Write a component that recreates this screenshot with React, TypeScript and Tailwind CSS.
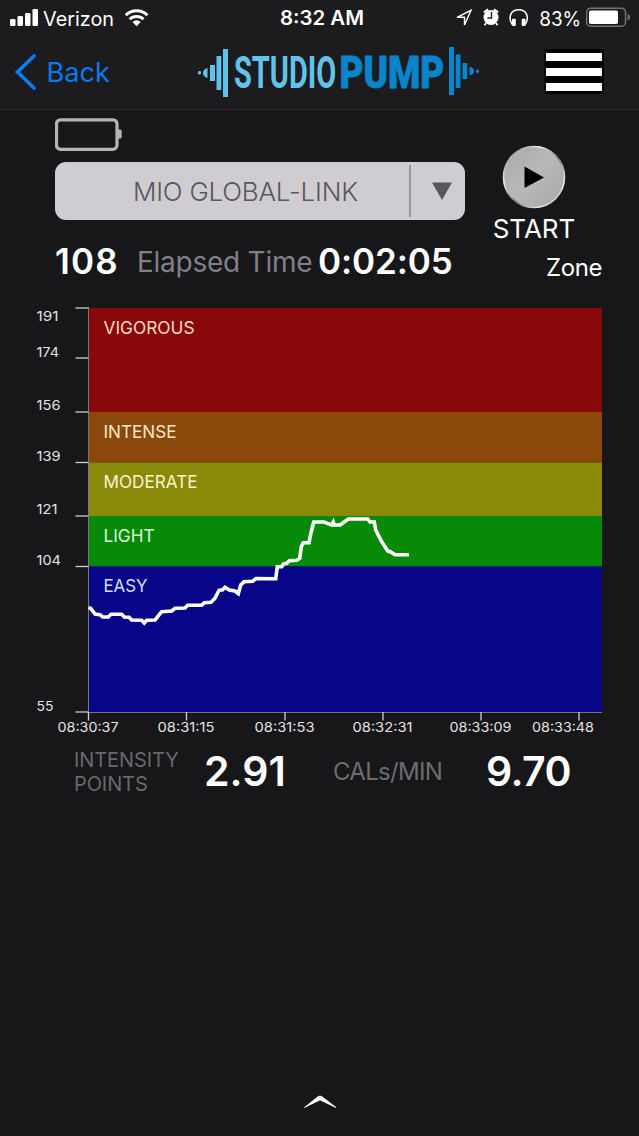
import React from 'react';

const zones = [
  { name: 'VIGOROUS', top: 308, bottom: 412, color: '#890809', text: '#f6dcc4', width: 91 },
  { name: 'INTENSE', top: 412, bottom: 462.5, color: '#8a480a', text: '#fbe8c8', width: 73 },
  { name: 'MODERATE', top: 462.5, bottom: 516, color: '#8a890a', text: '#fbf6cc', width: 94 },
  { name: 'LIGHT', top: 516, bottom: 566.5, color: '#088a09', text: '#dcf8dc', width: 51 },
  { name: 'EASY', top: 566.5, bottom: 712, color: '#080688', text: '#dedcfa', width: 44 },
];

const yTicks = [
  { label: '191', tick: 308, text: 321, width: 22 },
  { label: '174', tick: 358, text: 357, width: 22.5 },
  { label: '156', tick: 412, text: 410, width: 24 },
  { label: '139', tick: 462.5, text: 461, width: 24 },
  { label: '121', tick: 516, text: 514, width: 21 },
  { label: '104', tick: 566.5, text: 565, width: 24.5 },
  { label: '55', tick: 712, text: 711, width: 17 },
];

const xTicks = [
  { label: '08:30:37', tick: 88.5, text: 57.5, width: 61 },
  { label: '08:31:15', tick: 186.5, text: 157.5, width: 57 },
  { label: '08:31:53', tick: 285, text: 254.5, width: 60 },
  { label: '08:32:31', tick: 383, text: 352.5, width: 60 },
  { label: '08:33:09', tick: 481, text: 449.5, width: 62 },
  { label: '08:33:48', tick: 579, text: 532, width: 62 },
];

const heartRate =
  '88.5,607.7 90.7,608.3 95,614 100,614.7 102.7,617 108.3,617 111,614.3 121.7,614.3 124.3,617 129,617.3 131.7,620 141.7,620.3 144.3,623 146.7,620.3 155,620 161.7,611.7 171.7,611 175,608.3 185,608 187.7,605.3 201.7,605.3 204.3,602.7 211,602.3 215,598.3 219,590.3 222.7,589.7 225,587.3 229.3,590 235,591 238.3,593.7 240.7,585 244,581.7 252.7,581.2 256,578.5 275.7,578.7 277.3,566.7 281.7,566.7 283.3,564 286.7,563.3 289.3,560.7 296.7,560.3 299.7,558.3 301.3,546.7 303.3,542.7 309,542.7 311,532.7 313.7,522 324,522 327.3,523.3 331.7,525 333.3,522 334.3,525 340,525 348.3,519 367.7,519 370,522 374.3,522 375.7,530 381.7,541.7 387.7,551 390.7,552 395,554.7 409,554.7';

const StatusBar = () => (
  <div className="h-9 flex items-center text-white">
    <svg className="w-[150px] h-9 shrink-0" viewBox="0 0 150 36" fill="#fff">
      <rect x="10" y="19" width="5.5" height="7" rx="1.2" />
      <rect x="17.5" y="16" width="5.5" height="10" rx="1.2" />
      <rect x="25" y="13" width="5.5" height="13" rx="1.2" />
      <rect x="32.5" y="9" width="5.5" height="17" rx="1.2" />
      <text x="43" y="25.5" fontSize="20" textLength="71" lengthAdjust="spacingAndGlyphs">Verizon</text>
      <g fill="none" stroke="#fff" strokeWidth="3">
        <path d="M125.8 15.2a15.2 15.2 0 0 1 21.6 0" />
        <path d="M129.7 19.3a9.8 9.8 0 0 1 13.8 0" />
      </g>
      <path d="M132.5 22a5.8 5.8 0 0 1 8.2 0l-4.1 4.2z" />
    </svg>
    <svg className="w-[489px] h-9 shrink-0" viewBox="150 0 489 36" fill="#fff">
      <text x="280" y="25.3" fontSize="19.5" fontWeight="600" textLength="84" lengthAdjust="spacingAndGlyphs">8:32 AM</text>
      <path d="M457 17.3L471 10.3L464.5 25V17.3z" fill="none" stroke="#fff" strokeWidth="1.4" />
      <circle cx="491" cy="17.5" r="7.5" />
      <path d="M484 12.7a9 9 0 0 1 4.2-3.2M498 12.7a9 9 0 0 0-4.2-3.2" fill="none" stroke="#fff" strokeWidth="2" />
      <path d="M486 23l-1.5 2.2M496 23l1.5 2.2" stroke="#fff" strokeWidth="1.8" />
      <path d="M491.5 12v6h-4" fill="none" stroke="#1d1c1e" strokeWidth="1.4" />
      <path d="M512.2 24.5C507.500 17 511 9.8 518.7 9.8S529.9 17 525.2 24.5" fill="none" stroke="#fff" strokeWidth="1.5" />
      <rect x="512" y="18.7" width="3.8" height="7.3" rx="1" />
      <rect x="521.7" y="18.7" width="3.8" height="7.3" rx="1" />
      <text x="539.2" y="25.5" fontSize="20" textLength="42" lengthAdjust="spacingAndGlyphs">83%</text>
      <rect x="586.7" y="8.2" width="38.8" height="18" rx="4" fill="none" stroke="#727175" strokeWidth="1.5" />
      <rect x="589" y="10.5" width="29" height="13.5" rx="1.8" />
      <path d="M627.5 14c3.5 1 3.5 5.5 0 6.5z" fill="#727175" />
    </svg>
  </div>
);

const Logo = () => (
  <svg className="w-[284px] h-[60px]" viewBox="197 42 284 60">
    <g fill="#62c3ea">
      <rect x="198" y="71" width="3" height="3.5" rx="1.2" />
      <path d="M207.5 68v10q-4.500-1-4.500-5t4.500-5z" />
      <rect x="210" y="65" width="5" height="16" />
      <rect x="216.5" y="56" width="4.8" height="34" />
      <rect x="223" y="49" width="5" height="48" />
      <text transform="translate(234 88) scale(0.71 1)" fontFamily="Roboto, sans-serif" fontWeight="700" fontSize="43.5" textLength="144" lengthAdjust="spacingAndGlyphs">STUDIO</text>
    </g>
    <g fill="#0a84cb">
      <text transform="translate(339.5 88) scale(0.8 1)" fontFamily="Roboto, sans-serif" fontWeight="900" fontSize="43.5" textLength="131" lengthAdjust="spacingAndGlyphs" stroke="#0a84cb" strokeWidth="0.8">PUMP</text>
      <rect x="449" y="47" width="5" height="48" />
      <rect x="455.7" y="54.5" width="4.8" height="33.5" />
      <rect x="462.5" y="63" width="4.8" height="16" />
      <path d="M469.500 66.500v9q4.500-1 4.500-4.500t-4.500-4.500z" />
      <rect x="476" y="69.5" width="3" height="3.5" rx="1.2" />
    </g>
  </svg>
);

const NavBar = () => (
  <div className="h-[74px] flex items-start border-b border-[#2c2b2e]">
    <button className="w-[197px] h-[73px] shrink-0">
      <svg className="w-[197px] h-[73px]" viewBox="0 36 197 73">
        <path d="M34 56L17.5 72L34 88" fill="none" stroke="#0b79ef" strokeWidth="3.8" strokeLinecap="round" />
        <text x="46.5" y="81.5" fontSize="27" fill="#0b79ef" textLength="63.5" lengthAdjust="spacingAndGlyphs">Back</text>
      </svg>
    </button>
    <div className="mt-1.5">
      <Logo />
    </div>
    <button className="mt-[13px] ml-[63px] w-[60px] h-[45px] bg-black flex flex-col justify-between px-0.5 pt-1 pb-[3px]">
      <span className="block w-full h-2 bg-white"></span>
      <span className="block w-full h-2 bg-white"></span>
      <span className="block w-full h-2 bg-white"></span>
    </button>
  </div>
);

const Chart = () => (
  <svg className="block w-[639px] h-[442px]" viewBox="0 298 639 442">
    {zones.map((zone) => (
      <g key={zone.name}>
        <rect x="88" y={zone.top} width="514" height={zone.bottom - zone.top} fill={zone.color} />
        <text x="103.5" y={zone.top + 25.7} fontSize="17" fill={zone.text} textLength={zone.width} lengthAdjust="spacingAndGlyphs">
          {zone.name}
        </text>
      </g>
    ))}
    <path d="M88.5 307V712.5H602" fill="none" stroke="#77767c" strokeWidth="1" />
    {yTicks.map((tick) => (
      <g key={tick.label}>
        <path d={`M75.5 ${tick.tick}H88.5`} stroke="#d0cfd0" strokeWidth="1.3" />
        <text x="36.500" y={tick.text} fontSize="13.5" fill="#e4e3e4" textLength={tick.width} lengthAdjust="spacingAndGlyphs">
          {tick.label}
        </text>
      </g>
    ))}
    {xTicks.map((tick) => (
      <g key={tick.label}>
        <path d={`M${tick.tick} 712V720.5`} stroke="#d0cfd0" strokeWidth="1.3" />
        <text x={tick.text} y="732.3" fontSize="13.5" fill="#e4e3e4" textLength={tick.width} lengthAdjust="spacingAndGlyphs">
          {tick.label}
        </text>
      </g>
    ))}
    <polyline points={heartRate} fill="none" stroke="#fff" strokeWidth="3.6" />
  </svg>
);

const App = () => {
  return (
    <div className="w-[639px] h-[1136px] flex flex-col overflow-hidden bg-[#171619] font-['Inter',sans-serif] text-white">
      <header className="bg-[#1c1b1d]">
        <StatusBar />
        <NavBar />
      </header>

      {/* Device selector and start button */}
      <section className="h-[131px] flex">
        <div className="ml-[55px] w-[410px] shrink-0">
          <svg className="mt-[7px] block w-[68px] h-9" viewBox="0 0 68 36">
            <rect x="1.5" y="2.8" width="60.5" height="29.5" rx="4" fill="none" stroke="#b4b3b5" strokeWidth="3.3" />
            <path d="M63 12.500h2.200q1.500 0 1.500 1.500v6q0 1.500-1.500 1.500H63z" fill="#b4b3b5" />
          </svg>
          <button className="mt-[9px] w-[410px] h-[58px] flex items-center rounded-[11px] bg-[#cfcdd1] text-[#59585b]">
            <span className="w-[356px] h-[52px] flex items-center border-r-2 border-[#98969a] pl-[78px] text-[26px] font-light tracking-[-0.2px] whitespace-nowrap">
              MIO GLOBAL-LINK
            </span>
            <svg className="ml-[21px] w-5 h-[18px]" viewBox="0 0 20 18">
              <path d="M0 0.500H20L10 18z" fill="#59585b" />
            </svg>
          </button>
        </div>
        <button className="ml-[19px] w-[100px] pt-[35px] flex flex-col items-center">
          <svg className="w-16 h-16 shrink-0" viewBox="0 0 64 64">
            <defs>
              <linearGradient id="metal" x1="0" y1="0" x2="1" y2="1">
                <stop offset="0" stopColor="#aaa9aa" />
                <stop offset="0.5" stopColor="#b9b8b9" />
                <stop offset="1" stopColor="#a8a7a8" />
              </linearGradient>
              <linearGradient id="rim" x1="0" y1="0" x2="1" y2="1">
                <stop offset="0" stopColor="#666" />
                <stop offset="0.3" stopColor="#eee" />
                <stop offset="0.55" stopColor="#777" />
                <stop offset="0.8" stopColor="#eee" />
                <stop offset="1" stopColor="#666" />
              </linearGradient>
            </defs>
            <circle cx="32" cy="32" r="30.5" fill="url(#metal)" stroke="url(#rim)" strokeWidth="1.6" />
            <path d="M22.5 21.5V43L42 32.5z" fill="#000" />
          </svg>
          <span className="mt-1 text-[26px] leading-8 whitespace-nowrap">START</span>
        </button>
      </section>

      {/* Heart rate and timer */}
      <section className="h-[57px] flex items-start whitespace-nowrap">
        <span className="ml-[55px] w-[82px] text-[35px] leading-10 font-semibold tracking-[1.2px]">108</span>
        <span className="w-[181px] text-[28px] leading-[42px] tracking-[-0.25px] text-[#818084]">Elapsed Time</span>
        <span className="w-[228px] text-[35px] leading-10 font-semibold tracking-[-0.1px]">0:02:05</span>
        <span className="text-[24px] leading-[53px] tracking-[-0.4px]">Zone</span>
      </section>

      <Chart />

      {/* Session totals */}
      <section className="h-[64px] flex items-center pl-[74px] whitespace-nowrap">
        <div className="w-[130px] text-[20px] leading-6 tracking-[-0.1px] text-[#69686b]">
          <div>INTENSITY</div>
          <div>POINTS</div>
        </div>
        <div className="w-[129px] text-[41px] font-semibold">2.91</div>
        <div className="w-[153px] text-[24px] tracking-[-0.7px] text-[#6d6c6f]">CALs/MIN</div>
        <div className="text-[41px] font-semibold tracking-[-0.6px]">9.70</div>
      </section>

      <footer className="mt-auto h-[41px] flex justify-center">
        <svg className="w-8 h-[13px]" viewBox="0 0 32 13">
          <path d="M0.5 12.5L14 1.7Q16 0.4 18 1.7L32 12.5L16 4.9z" fill="#fff" stroke="#fff" strokeWidth="0.8" />
        </svg>
      </footer>
    </div>
  );
};

export default App;
